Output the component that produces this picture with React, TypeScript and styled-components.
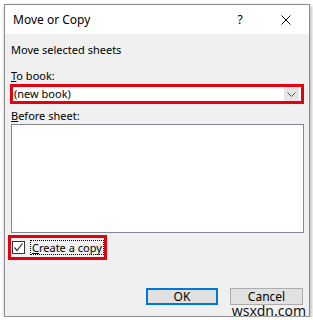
import { createGlobalStyle, styled } from 'styled-components'

const GlobalStyle = createGlobalStyle`
  html, body {
    margin: 0;
    background: #fff;
  }
  body {
    font-family: 'Noto Sans', 'Liberation Sans', sans-serif;
    color: #000;
  }
`

export default function App () {
  return (
    <>
      <GlobalStyle />
      <Window>
        <TitleBar>
          <span>Move or Copy</span>
          <Spacer />
          <CaptionButton>?</CaptionButton>
          <CaptionButton>
            <svg width='10' height='10' viewBox='0 0 10 10'>
              <path d='M0.5 0.5 L9.5 9.5 M9.5 0.5 L0.5 9.5' stroke='#000' strokeWidth='1' fill='none' />
            </svg>
          </CaptionButton>
        </TitleBar>
        <Body>
          <Text $top={8}>Move selected sheets</Text>
          <Text $top={10}><u>T</u>o book:</Text>
          <Select>
            <span>(new book)</span>
            <DropButton>
              <svg width='9' height='5' viewBox='0 0 9 5'>
                <path d='M0.5 0.5 L4.5 4.5 L8.5 0.5' stroke='#555' strokeWidth='1' fill='none' />
              </svg>
            </DropButton>
          </Select>
          <Text $top={4}><u>B</u>efore sheet:</Text>
          <ListBox />
          <CheckRow>
            <CheckBox>
              <svg width='11' height='11' viewBox='0 0 11 11'>
                <path d='M1.5 5.5 L4 8.5 L9.5 1.5' stroke='#333' strokeWidth='1.2' fill='none' />
              </svg>
            </CheckBox>
            <CheckLabel><u>C</u>reate a copy</CheckLabel>
          </CheckRow>
          <Buttons>
            <Button $primary>OK</Button>
            <Button>Cancel</Button>
          </Buttons>
        </Body>
        <Watermark>wsxdn.com</Watermark>
      </Window>
    </>
  )
}

const Window = styled.div`
  position: relative;
  box-sizing: border-box;
  margin: 4px 0 0 4px;
  width: 306px;
  height: 313px;
  border: 1px solid #8c8c8c;
  background: #f0f0f0;
  box-shadow: 1px 2px 4px rgba(0, 0, 0, 0.35);
  display: flex;
  flex-direction: column;
`

const TitleBar = styled.div`
  height: 29px;
  background: #fff;
  display: flex;
  align-items: center;
  padding-left: 8px;
  font-size: 12px;
`

const Spacer = styled.div`
  flex: 1;
`

const CaptionButton = styled.div`
  width: 46px;
  height: 29px;
  display: flex;
  align-items: center;
  justify-content: center;
  font-size: 12px;
`

const Body = styled.div`
  display: flex;
  flex-direction: column;
  padding: 0 5px 0 6px;
  font-size: 11px;
  white-space: nowrap;
`

const Text = styled.div<{ $top: number }>`
  margin-top: ${p => p.$top}px;
  line-height: 16px;
  height: 16px;
`

const Select = styled.div`
  box-sizing: border-box;
  margin-left: -1px;
  height: 20px;
  border: 3px solid #e3000f;
  background: #fff;
  display: flex;
  align-items: center;
  padding-left: 1px;
  line-height: 14px;

  span {
    flex: 1;
  }
`

const DropButton = styled.div`
  width: 15px;
  height: 14px;
  margin-right: 2px;
  background: #e5e5e5;
  display: flex;
  align-items: center;
  justify-content: center;
`

const ListBox = styled.div`
  box-sizing: border-box;
  height: 109px;
  background: #fff;
  border: 1px solid #828790;
`

const CheckRow = styled.div`
  box-sizing: border-box;
  margin: 2px 0 0 -3px;
  width: 99px;
  height: 25px;
  border: 3px solid #e3000f;
  display: flex;
  align-items: center;
  gap: 5px;
  padding-left: 1px;
`

const CheckBox = styled.div`
  box-sizing: border-box;
  flex: none;
  width: 13px;
  height: 13px;
  border: 1px solid #333;
  background: #fff;
  display: flex;
  align-items: center;
  justify-content: center;
`

const CheckLabel = styled.div`
  border: 1px dotted #000;
  padding: 0 1px;
  line-height: 13px;
`

const Buttons = styled.div`
  display: flex;
  justify-content: flex-end;
  gap: 12px;
  margin: 28px 1px 0 0;
`

const Button = styled.div<{ $primary?: boolean }>`
  box-sizing: border-box;
  width: ${p => (p.$primary ? 72 : 73)}px;
  height: 17px;
  display: flex;
  align-items: center;
  justify-content: center;
  font-size: 12px;
  background: #e1e1e1;
  border: ${p => (p.$primary ? '2px solid #0078d7' : '1px solid #adadad')};
`

const Watermark = styled.div`
  position: absolute;
  right: 3px;
  bottom: -4px;
  font-size: 14px;
  color: #111;
  text-shadow: 0 0 2px #fff, 0 0 2px #fff;
`
